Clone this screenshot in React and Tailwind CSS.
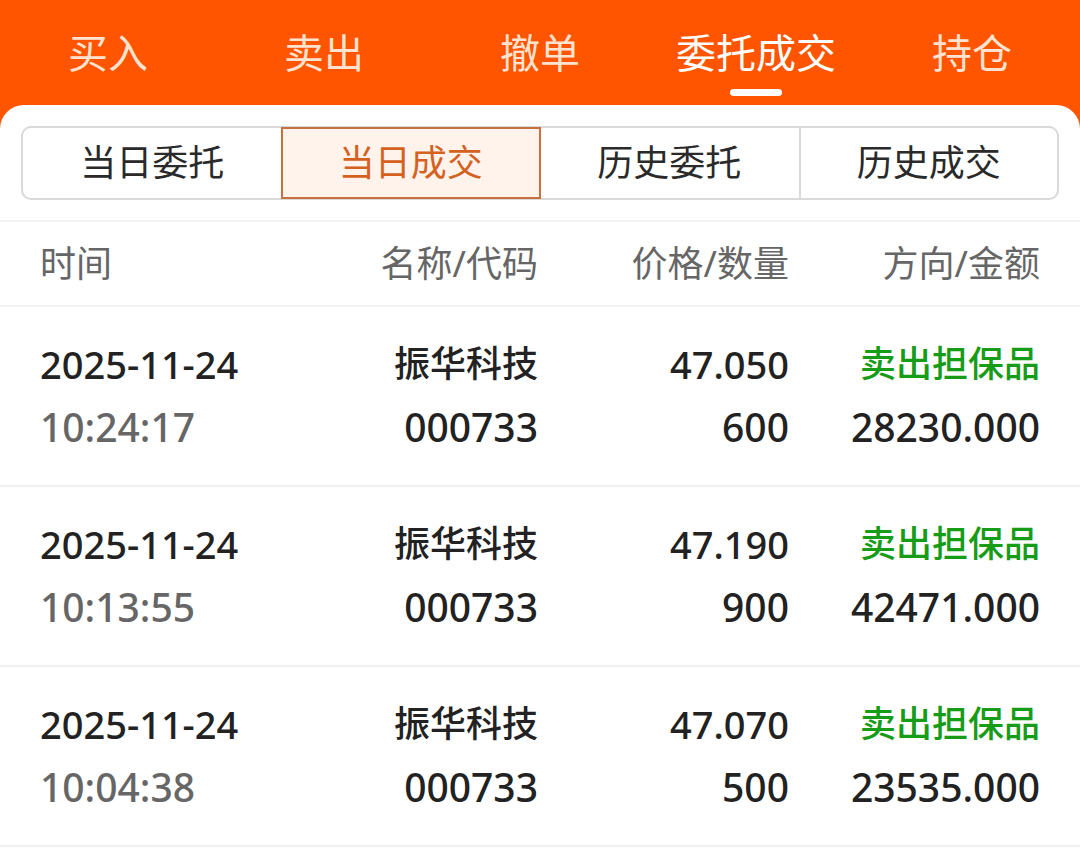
import React from "react";

const tabs = ["买入", "卖出", "撤单", "委托成交", "持仓"];
const segments = ["当日委托", "当日成交", "历史委托", "历史成交"];

const trades = [
  { date: "2025-11-24", time: "10:24:17", name: "振华科技", code: "000733", price: "47.050", qty: "600", dir: "卖出担保品", amount: "28230.000" },
  { date: "2025-11-24", time: "10:13:55", name: "振华科技", code: "000733", price: "47.190", qty: "900", dir: "卖出担保品", amount: "42471.000" },
  { date: "2025-11-24", time: "10:04:38", name: "振华科技", code: "000733", price: "47.070", qty: "500", dir: "卖出担保品", amount: "23535.000" },
];

const font = { fontFamily: '"Noto Sans", "Noto Sans CJK SC", sans-serif' };

const App = () => {
  const activeTab = 3;
  const activeSeg = 1;

  return (
    <div className="w-[1080px] h-[862px] overflow-hidden bg-[#ff5500]" style={font}>
      {/* top tabs */}
      <div className="grid grid-cols-5 h-[105px]">
        {tabs.map((t, i) => (
          <div key={t} className="relative flex items-center justify-center">
            <span
              className={
                "text-[40px] leading-none " +
                (i === activeTab ? "text-white" : "text-[#ffe2cf]")
              }
            >
              {t}
            </span>
            {i === activeTab && (
              <span className="absolute left-1/2 -translate-x-1/2 top-[89px] w-[52px] h-[7px] rounded-full bg-white" />
            )}
          </div>
        ))}
      </div>

      <div className="bg-white rounded-t-[24px] h-[757px]">
        {/* segmented control */}
        <div className="px-[21px] pt-[21px] pb-[20px] border-b-2 border-[#f2f2f2]">
          <div className="grid grid-cols-4 h-[74px] border-2 border-[#d9d9d9] rounded-[10px]">
            {segments.map((s, i) => (
              <div
                key={s}
                className={
                  "flex items-center justify-center text-[36px] " +
                  (i === activeSeg
                    ? "bg-[#fff3ec] text-[#d5611f] outline-2 outline-[#c8703f] -outline-offset-1 relative"
                    : "text-[#2a2a2a]") +
                  (i === 3 ? " border-l-2 border-[#d9d9d9]" : "")
                }
              >
                {s}
              </div>
            ))}
          </div>
        </div>

        {/* column header */}
        <div className="grid grid-cols-[1fr_250px_251px_251px] px-[40px] h-[85px] items-center border-b-2 border-[#f2f2f2] text-[36px] text-[#666666]">
          <span>时间</span>
          <span className="text-right">名称/代码</span>
          <span className="text-right">价格/数量</span>
          <span className="text-right">方向/金额</span>
        </div>

        {/* trade rows */}
        {trades.map((r) => (
          <div
            key={r.time}
            className="grid grid-cols-[1fr_250px_251px_251px] px-[40px] pt-[32px] pb-[33px] gap-y-[13px] border-b-2 border-[#f0f0f0] leading-[50px] text-[#222222] font-medium"
          >
            <span className="text-[38px]">{r.date}</span>
            <span className="text-right text-[36px]">{r.name}</span>
            <span className="text-right text-[38px]">{r.price}</span>
            <span className="text-right text-[36px] text-[#169c16]">{r.dir}</span>
            <span className="text-[39px] text-[#666666]">{r.time}</span>
            <span className="text-right text-[39px]">{r.code}</span>
            <span className="text-right text-[39px]">{r.qty}</span>
            <span className="text-right text-[39px]">{r.amount}</span>
          </div>
        ))}
      </div>
    </div>
  );
};

export default App;
